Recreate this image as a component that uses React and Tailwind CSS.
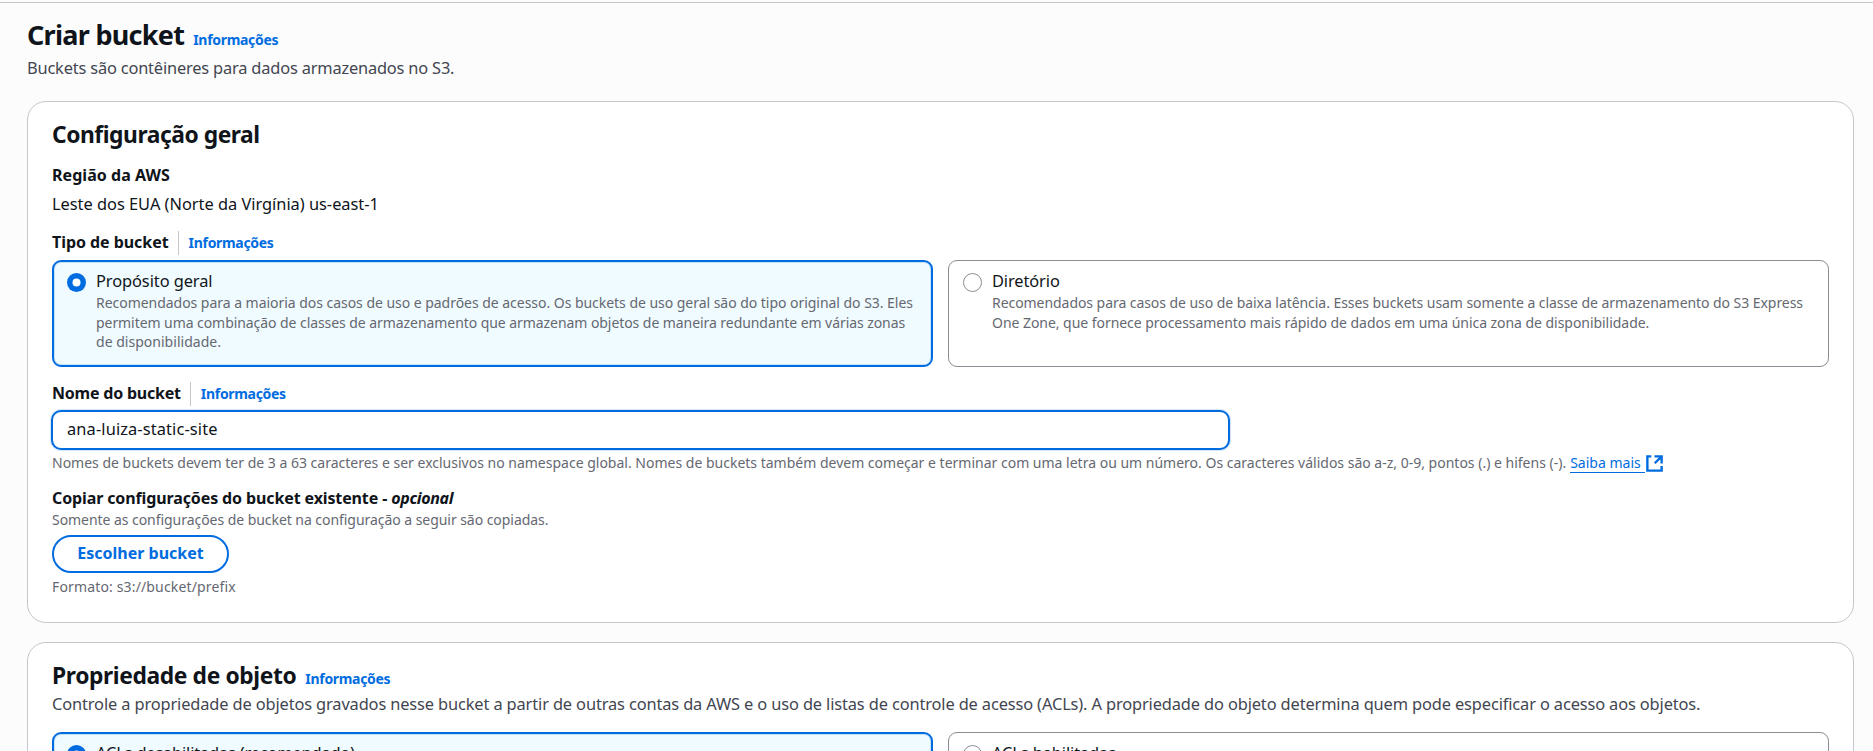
import { useState } from "react";

function InfoLink() {
  return (
    <a href="#" className="text-[14px] font-bold tracking-[-0.31px] text-[#006ce0]">
      Informações
    </a>
  );
}

function FieldLabel({ children }) {
  return (
    <div className="flex h-[25px] items-start">
      {children}
      <span className="mt-px mr-[10px] ml-[9px] h-6 w-px bg-[#c6c6cd]" />
      <span className="leading-6">
        <InfoLink />
      </span>
    </div>
  );
}

function Radio({ checked }) {
  return (
    <svg className="mt-[4px] mr-[10px] h-[19px] w-[19px] shrink-0" viewBox="0 0 19 19">
      {checked ? (
        <>
          <circle cx="9.5" cy="9.5" r="9.5" fill="#006ce0" />
          <circle cx="9.5" cy="9.5" r="4" fill="#fff" />
        </>
      ) : (
        <circle cx="9.5" cy="9.5" r="9" fill="#fff" stroke="#8c8c94" />
      )}
    </svg>
  );
}

function Tile({ checked, onSelect, title, children }) {
  return (
    <div
      onClick={onSelect}
      className={
        checked
          ? "flex h-[107px] rounded-[9px] border-2 border-[#006ce0] bg-[#f0fbff] px-[13px] pt-[7px] shadow-[inset_0_0_0_1px_#c5e3fa]"
          : "flex h-[107px] rounded-[9px] border border-[#8c8c94] bg-white px-[14px] pt-[8px]"
      }
    >
      <Radio checked={checked} />
      <div className="whitespace-nowrap">
        {title}
        {children}
      </div>
    </div>
  );
}

function ExternalIcon() {
  return (
    <svg className="mt-[1px] h-[19px] w-[19px]" viewBox="0 0 16 16" fill="none" stroke="#006ce0" strokeWidth="2">
      <path d="M8 2h6v6M8.2 7.8L14 2M5.3 2H2v12h12v-3.8" />
    </svg>
  );
}

export default function App() {
  const [type, setType] = useState("general");
  const [acl, setAcl] = useState("off");
  const [name, setName] = useState("ana-luiza-static-site");

  return (
    <div className="h-[751px] overflow-hidden bg-[#fcfcfd] pt-[2px] font-['Noto_Sans','Open_Sans',sans-serif] text-[16.4px] leading-6 whitespace-nowrap text-[#0f141a]">
      <div className="h-px bg-[#c6c6cd]" />
      <main className="pt-[15px] pr-[19px] pl-[27px]">
        <header>
          <div className="flex h-[34px] items-baseline gap-[9px] leading-[34px]">
            <h1 className="text-[27px] font-bold tracking-[-0.72px]">Criar bucket</h1>
            <InfoLink />
          </div>
          <p className="mt-[4px] tracking-[-0.18px] text-[#424650]">
            Buckets são contêineres para dados armazenados no S3.
          </p>
        </header>

        <section className="mt-[21px] rounded-[19px] border border-[#c6c6cd] bg-white pt-[19px] pr-[24px] pb-[25px] pl-[24px]">
          <h2 className="text-[22.8px] leading-7 font-bold tracking-[-0.45px]">Configuração geral</h2>
          <div className="mt-[14px] text-[16px] font-bold tracking-[0.05px]">Região da AWS</div>
          <div className="mt-[5px] tracking-[-0.02px]">Leste dos EUA (Norte da Virgínia) us-east-1</div>

          <div className="mt-[14px]">
            <FieldLabel>
              <span className="text-[16px] font-bold tracking-[-0.05px]">Tipo de bucket</span>
            </FieldLabel>
          </div>
          <div className="mt-[5px] grid grid-cols-2 gap-[15px]">
            <Tile
              checked={type === "general"}
              onSelect={() => setType("general")}
              title={<div className="tracking-[-0.08px]">Propósito geral</div>}
            >
              <div className="text-[14px] leading-[19.5px] tracking-[-0.035px] text-[#656871]">
                Recomendados para a maioria dos casos de uso e padrões de acesso. Os buckets de uso geral são do tipo original do S3. Eles
                <br />
                <span className="tracking-[-0.065px]">
                  permitem uma combinação de classes de armazenamento que armazenam objetos de maneira redundante em várias zonas
                </span>
                <br />
                <span className="tracking-[0.02px]">de disponibilidade.</span>
              </div>
            </Tile>
            <Tile
              checked={type === "directory"}
              onSelect={() => setType("directory")}
              title={<div className="tracking-[-0.1px]">Diretório</div>}
            >
              <div className="text-[14px] leading-[19.5px] tracking-[-0.057px] text-[#656871]">
                Recomendados para casos de uso de baixa latência. Esses buckets usam somente a classe de armazenamento do S3 Express
                <br />
                <span className="tracking-[-0.045px]">
                  One Zone, que fornece processamento mais rápido de dados em uma única zona de disponibilidade.
                </span>
              </div>
            </Tile>
          </div>

          <div className="mt-[14px]">
            <FieldLabel>
              <label htmlFor="bucket-name" className="text-[16px] font-bold tracking-[-0.21px]">
                Nome do bucket
              </label>
            </FieldLabel>
          </div>
          <input
            id="bucket-name"
            value={name}
            onChange={(e) => setName(e.target.value)}
            className="mt-[4px] -ml-px block h-[40px] w-[1179px] rounded-[10px] border-2 border-[#006ce0] bg-white px-[14px] pb-[3px] tracking-[0.12px] shadow-[0_0_0_1px_#d4e6fa] outline-none"
          />
          <div className="mt-[3px] flex h-5 text-[14px] leading-5 text-[#656871]">
            <span>
              Nomes de buckets devem ter de 3 a 63 caracteres e ser exclusivos no namespace global. Nomes de buckets também devem começar e terminar com uma letra ou um número. Os caracteres válidos são a-z, 0-9, pontos (.) e hifens (-).
            </span>
            <a href="#" className="ml-1 flex text-[#006ce0]">
              <span className="h-5 border-b border-[#006ce0] pr-[4px]">Saiba mais</span>
              <ExternalIcon />
            </a>
          </div>

          <div className="mt-[13px] text-[16px] font-bold tracking-[-0.12px]">
            Copiar configurações do bucket existente - <i className="tracking-[-0.35px]">opcional</i>
          </div>
          <div className="text-[14px] leading-5 tracking-[-0.05px] text-[#656871]">
            Somente as configurações de bucket na configuração a seguir são copiadas.
          </div>
          <button className="mt-[5px] flex h-[38px] w-[177px] items-center justify-center rounded-full border-2 border-[#006ce0] bg-white pb-[3px] text-[16px] font-bold text-[#006ce0]">
            Escolher bucket
          </button>
          <div className="mt-[4px] text-[14px] leading-5 tracking-[0.15px] text-[#656871]">Formato: s3://bucket/prefix</div>
        </section>

        <section className="mt-[19px] rounded-[19px] border border-[#c6c6cd] bg-white pt-[19px] pr-[24px] pb-6 pl-[24px]">
          <div className="flex h-7 items-baseline gap-[9px] leading-7">
            <h2 className="text-[22.8px] font-bold tracking-[-0.38px]">Propriedade de objeto</h2>
            <InfoLink />
          </div>
          <p className="mt-[2px] tracking-[-0.13px] text-[#424650]">
            Controle a propriedade de objetos gravados nesse bucket a partir de outras contas da AWS e o uso de listas de controle de acesso (ACLs). A propriedade do objeto determina quem pode especificar o acesso aos objetos.
          </p>
          <div className="mt-[16px] grid grid-cols-2 gap-[15px]">
            <Tile
              checked={acl === "off"}
              onSelect={() => setAcl("off")}
              title={<div className="tracking-[-0.165px]">ACLs desabilitadas (recomendado)</div>}
            />
            <Tile
              checked={acl === "on"}
              onSelect={() => setAcl("on")}
              title={<div className="tracking-[-0.1px]">ACLs habilitadas</div>}
            />
          </div>
        </section>
      </main>
    </div>
  );
}
